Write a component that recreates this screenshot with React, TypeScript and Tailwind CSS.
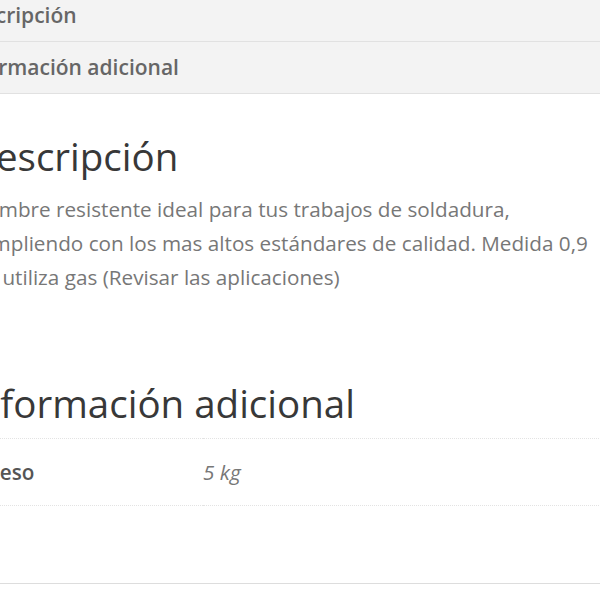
export default function App() {
  return (
    <div className="h-[600px] w-[600px] overflow-hidden bg-white font-['Open_Sans',sans-serif]">
      <ul className="-mt-[10px] -ml-[42px] w-[700px] bg-[#f3f3f3]">
        <li className="flex h-[52px] items-center border-b border-[#e1e1e1] text-[21px] font-semibold text-[#666]">
          Descripción
        </li>
        <li className="flex h-[52px] items-center border-b border-[#e1e1e1] text-[21px] font-semibold text-[#666]">
          Información adicional
        </li>
      </ul>

      <div className="-ml-[31px] w-[680px]">
        <h2 className="mt-[39px] -ml-[1px] text-[38.5px] leading-[1.2] text-[#383838]">Descripción</h2>
        <p className="mt-[13px] w-[628px] text-[20.7px] leading-[34px] text-[#777]">
          Alambre resistente ideal para tus trabajos de soldadura, cumpliendo con los mas altos
          estándares de calidad. Medida 0,9 No utiliza gas (Revisar las aplicaciones)
        </p>

        <h2 className="mt-[86px] -ml-[3px] text-[38.5px] leading-[1.2] text-[#383838]">
          Información adicional
        </h2>
        <table className="mt-[12px] w-full border-collapse">
          <tbody>
            <tr className="h-[67px] border-y border-dotted border-[#e3e3e3]">
              <th className="w-[234px] pl-[18px] text-left text-[20.7px] font-semibold text-[#555]">
                Peso
              </th>
              <td className="text-[20.7px] italic text-[#777]">5 kg</td>
            </tr>
          </tbody>
        </table>
        <div className="mt-[77px] border-t border-[#ddd]" />
      </div>
    </div>
  );
}
